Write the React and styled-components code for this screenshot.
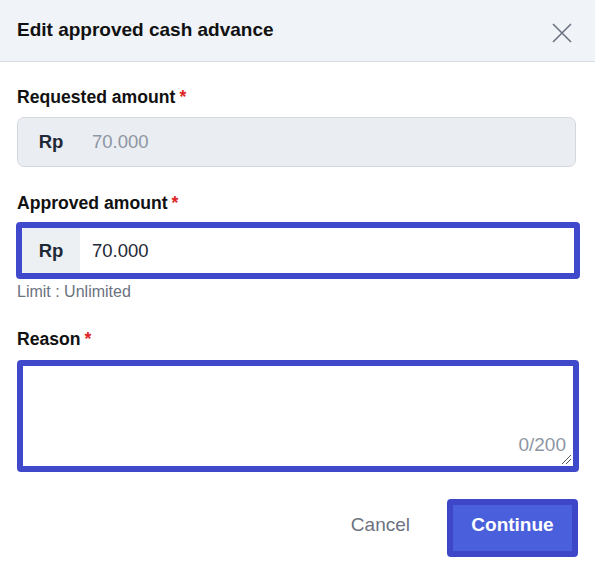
import React from "react";
import styled, { createGlobalStyle } from "styled-components";

const Global = createGlobalStyle`
  html, body { margin: 0; padding: 0; background: #ffffff; }
  body { font-family: "Liberation Sans", Arial, sans-serif; color: #111827; }
  * { box-sizing: border-box; }
`;

const Dialog = styled.div`
  width: 595px;
  height: 571px;
  background: #ffffff;
  display: flex;
  flex-direction: column;
`;

const Header = styled.div`
  height: 62px;
  background: #f0f3f8;
  border-bottom: 1px solid #d8dbe1;
  display: flex;
  align-items: center;
  justify-content: space-between;
  padding: 0 23px 0 17px;
`;

const Title = styled.h2`
  margin: 0;
  font-size: 19px;
  font-weight: 700;
  color: #111111;
  line-height: 22px;
  margin-top: -2px;
`;

const Close = styled.button`
  border: none;
  background: transparent;
  padding: 0;
  width: 20px;
  height: 20px;
  display: flex;
  align-items: center;
  justify-content: center;
  margin-top: 4px;
  cursor: pointer;
`;

const Body = styled.div`
  padding: 25px 17px 0 17px;
  display: flex;
  flex-direction: column;
`;

const Label = styled.label`
  display: block;
  font-size: 17.6px;
  font-weight: 700;
  line-height: 20px;
  color: #111111;
  margin-top: ${(p) => p.$top || 0}px;
`;

const Star = styled.span`
  color: #e02424;
  margin-left: 4px;
`;

const Field = styled.div`
  margin-top: ${(p) => p.$top}px;
  margin-left: ${(p) => (p.$focused ? -1 : 0)}px;
  width: ${(p) => (p.$focused ? 564 : 559)}px;
  height: ${(p) => (p.$focused ? 57 : 50)}px;
  border: ${(p) => (p.$focused ? "6px solid #4049cb" : "1px solid #d5d9df")};
  border-radius: ${(p) => (p.$focused ? 4 : 7)}px;
  background: ${(p) => (p.$disabled ? "#eaedf1" : "#ffffff")};
  padding-left: ${(p) => (p.$focused ? 0 : 4)}px;
  display: flex;
  align-items: stretch;
`;

const Addon = styled.div`
  width: 58px;
  display: flex;
  align-items: center;
  justify-content: center;
  font-size: 18.5px;
  font-weight: 700;
  color: #1f2937;
  background: ${(p) => (p.$disabled ? "transparent" : "#edf0f3")};
  border-radius: 3px 0 0 3px;
`;

const Value = styled.div`
  display: flex;
  align-items: center;
  padding-left: 12px;
  font-size: 18.5px;
  color: ${(p) => (p.$disabled ? "#8d96a3" : "#1f2937")};
`;

const Hint = styled.div`
  margin-top: 5px;
  font-size: 16px;
  line-height: 16px;
  color: #6b7280;
`;

const TextBox = styled.div`
  margin-top: 11px;
  width: 562px;
  height: 112px;
  border: 6px solid #4049cb;
  border-radius: 4px;
  position: relative;
  background: #ffffff;
`;

const Counter = styled.span`
  position: absolute;
  right: 7px;
  bottom: 11px;
  font-size: 19px;
  line-height: 20px;
  color: #8d96a3;
`;

const Grip = styled.svg`
  position: absolute;
  right: 1px;
  bottom: 1px;
`;

const Actions = styled.div`
  margin-top: 27px;
  display: flex;
  justify-content: flex-end;
  align-items: center;
  gap: 37px;
`;

const CancelBtn = styled.button`
  border: none;
  background: transparent;
  padding: 0 0 6px 0;
  font-family: inherit;
  font-size: 19px;
  color: #6b7280;
  cursor: pointer;
`;

const PrimaryBtn = styled.button`
  width: 131px;
  height: 58px;
  border: 6px solid #3f47c9;
  border-radius: 4px;
  background: #4a5fdb;
  color: #ffffff;
  font-family: inherit;
  font-size: 19px;
  font-weight: 700;
  cursor: pointer;
  padding: 0 0 6px 0;
`;

export default function App() {
  return (
    <>
      <Global />
      <Dialog>
        <Header>
          <Title>Edit approved cash advance</Title>
          <Close aria-label="Close">
            <svg width="20" height="20" viewBox="0 0 20 20">
              <path d="M1 1 L19 19 M19 1 L1 19" stroke="#6b7280" strokeWidth="1.6" fill="none" />
            </svg>
          </Close>
        </Header>
        <Body>
          <Label>
            Requested amount<Star>*</Star>
          </Label>
          <Field $top={10} $disabled>
            <Addon $disabled>Rp</Addon>
            <Value $disabled>70.000</Value>
          </Field>

          <Label $top={26}>
            Approved amount<Star>*</Star>
          </Label>
          <Field $top={9} $focused>
            <Addon>Rp</Addon>
            <Value>70.000</Value>
          </Field>
          <Hint>Limit : Unlimited</Hint>

          <Label $top={29}>
            Reason<Star>*</Star>
          </Label>
          <TextBox>
            <Counter>0/200</Counter>
            <Grip width="12" height="12" viewBox="0 0 12 12">
              <path d="M2 11 L11 2 M6 11 L11 6" stroke="#555" strokeWidth="1" />
            </Grip>
          </TextBox>

          <Actions>
            <CancelBtn>Cancel</CancelBtn>
            <PrimaryBtn>Continue</PrimaryBtn>
          </Actions>
        </Body>
      </Dialog>
    </>
  );
}
